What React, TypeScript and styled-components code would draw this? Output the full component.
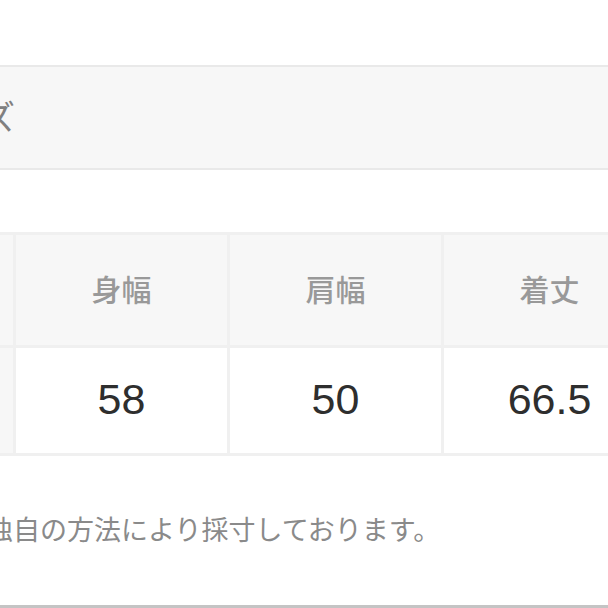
import React from 'react';
import styled, { createGlobalStyle } from 'styled-components';

const GlobalStyle = createGlobalStyle`
    html, body {
        margin: 0;
        padding: 0;
        background: #fff;
    }
    body {
        font-family: "Liberation Sans", "Noto Sans CJK JP", sans-serif;
    }
`;

const Page = styled.div`
    width: 608px;
    height: 608px;
    overflow: hidden;
    display: flex;
    flex-direction: column;
`;

const Inner = styled.div`
    margin-left: -190px;
    padding-top: 65px;
    display: flex;
    flex-direction: column;
    flex: 1;
`;

const SectionBand = styled.div`
    box-sizing: border-box;
    height: 105px;
    background: #f7f7f7;
    border-top: 2px solid #e9e9e9;
    border-bottom: 2px solid #e9e9e9;
    display: flex;
    align-items: center;
    padding-left: 104px;
    padding-bottom: 4px;
`;

const SectionTitle = styled.h2`
    margin: 0;
    font-family: "Noto Sans CJK JP", sans-serif;
    font-size: 34px;
    font-weight: 400;
    color: #808080;
    white-space: nowrap;
`;

const SizeGrid = styled.div`
    margin-top: 62px;
    display: grid;
    grid-template-columns: 200px repeat(3, 211px);
    grid-auto-rows: 110px 105px;
    gap: 3px;
    padding: 3px;
    background: #f0f0f0;
    width: max-content;
`;

const Cell = styled.div<{ $head?: boolean }>`
    display: flex;
    align-items: center;
    justify-content: center;
    background: ${({ $head }) => ($head ? '#f7f7f7' : '#fff')};
    color: ${({ $head }) => ($head ? '#999' : '#2e2e2e')};
    font-family: ${({ $head }) => ($head ? '"Noto Sans CJK JP", sans-serif' : '"Liberation Sans", "Noto Sans CJK JP", sans-serif')};
    font-size: ${({ $head }) => ($head ? '30px' : '43px')};
    font-weight: ${({ $head }) => ($head ? 500 : 400)};
    padding-bottom: ${({ $head }) => ($head ? '4px' : '2px')};
`;

const Note = styled.p`
    margin: 53px 0 0;
    padding-left: 176px;
    font-family: "Noto Sans CJK JP", sans-serif;
    font-size: 27px;
    line-height: 40px;
    color: #8a8a8a;
    white-space: nowrap;
`;

const BottomRule = styled.div`
    margin-top: auto;
    height: 3px;
    background: #c4c4c4;
`;

const columns = ['身幅', '肩幅', '着丈'];
const values = ['58', '50', '66.5'];

export default function App() {
    return (
        <>
            <GlobalStyle />
            <Page>
                <Inner>
                    <SectionBand>
                        <SectionTitle>サイズ</SectionTitle>
                    </SectionBand>
                    <SizeGrid>
                        <Cell $head />
                        {columns.map((c) => (
                            <Cell $head key={c}>{c}</Cell>
                        ))}
                        <Cell $head />
                        {values.map((v) => (
                            <Cell key={v}>{v}</Cell>
                        ))}
                    </SizeGrid>
                    <Note>独自の方法により採寸しております。</Note>
                    <BottomRule />
                </Inner>
            </Page>
        </>
    );
}
